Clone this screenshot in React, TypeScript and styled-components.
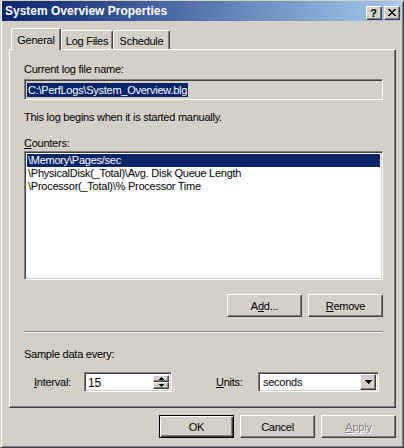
import React from "react";
import styled, { createGlobalStyle, css } from "styled-components";

const FACE = "#D4D0C8";
const HI = "#FFFFFF";
const SH = "#808080";
const DK = "#404040";
const NAVY = "#0A246A";

const Global = createGlobalStyle`
  html, body { margin: 0; padding: 0; background: ${FACE}; }
  * { box-sizing: border-box; }
  body { font-family: "Liberation Sans", Arial, sans-serif; font-size: 11px; color: #000; }
`;

const raised = css`
  border: 1px solid;
  border-color: ${HI} ${DK} ${DK} ${HI};
  box-shadow: inset -1px -1px ${SH};
  background: ${FACE};
`;

const sunken = css`
  border: 1px solid;
  border-color: ${SH} ${HI} ${HI} ${SH};
  box-shadow: inset 1px 1px ${DK}, inset -1px -1px ${FACE};
`;

const Window = styled.div`
  width: 404px;
  height: 448px;
  display: flex;
  flex-direction: column;
  background: ${FACE};
  border: 1px solid;
  border-color: ${FACE} ${DK} ${DK} ${FACE};
  box-shadow: inset 1px 1px ${HI}, inset -1px -1px ${SH};
  padding: 0 2px 2px 1px;
  font: 11px "Liberation Sans", Arial, sans-serif;
  letter-spacing: -0.25px;
`;

const TitleBar = styled.div`
  height: 20px;
  flex: none;
  display: flex;
  align-items: center;
  padding: 0 1px 0 3px;
  background: linear-gradient(to right, ${NAVY}, #a6caf0);
`;

const TitleText = styled.div`
  flex: 1;
  color: #fff;
  font-weight: bold;
  font-size: 12px;
  letter-spacing: 0;
  white-space: nowrap;
`;

const TitleControls = styled.div`
  display: flex;
  gap: 2px;
  margin-top: 3px;
`;

const TitleButton = styled.div`
  ${raised};
  width: 16px;
  height: 14px;
  display: flex;
  align-items: center;
  justify-content: center;
  font-weight: bold;
  font-size: 11px;
  line-height: 12px;
  letter-spacing: 0;
  padding-right: 1px;
`;

const Body = styled.div`
  flex: 1;
  display: flex;
  flex-direction: column;
  padding: 7px 5px 0 7px;
`;

const TabStrip = styled.div`
  height: 21px;
  display: flex;
  align-items: flex-end;
  padding-left: 2px;
  position: relative;
  z-index: 1;
`;

const Tab = styled.div<{ $active?: boolean; $w: number }>`
  width: ${(p) => p.$w}px;
  height: ${(p) => (p.$active ? 22 : 19)}px;
  margin-bottom: ${(p) => (p.$active ? -1 : 0)}px;
  padding-top: ${(p) => (p.$active ? 0 : 1)}px;
  background: ${FACE};
  border-top: 1px solid ${HI};
  border-left: 1px solid ${HI};
  border-right: 1px solid ${DK};
  box-shadow: inset -1px 0 ${SH};
  border-top-left-radius: 2px;
  border-top-right-radius: 2px;
  display: flex;
  align-items: center;
  justify-content: center;
  white-space: nowrap;
`;

const Panel = styled.div`
  height: 359px;
  flex: none;
  display: flex;
  flex-direction: column;
  border: 1px solid;
  border-color: ${HI} ${DK} ${DK} ${HI};
  box-shadow: inset -1px -1px ${SH};
  padding: 13px 12px 0 14px;
`;

const Label = styled.div<{ $mt?: number }>`
  line-height: 13px;
  height: 13px;
  margin-top: ${(p) => p.$mt ?? 0}px;
  white-space: nowrap;
`;

const U = styled.span`
  text-decoration: underline;
  text-underline-offset: 1px;
`;

const ReadOnlyField = styled.div`
  ${sunken};
  margin-top: 3px;
  height: 21px;
  background: ${FACE};
  display: flex;
  align-items: center;
  padding: 0 2px 0 2px;
`;

const Selected = styled.span`
  background: ${NAVY};
  color: #fff;
  line-height: 14px;
  padding: 0 1px;
`;

const ListBox = styled.div`
  ${sunken};
  margin-top: 1px;
  height: 129px;
  background: #fff;
  padding: 2px 2px;
  display: flex;
  flex-direction: column;
`;

const ListRow = styled.div<{ $selected?: boolean }>`
  height: 13px;
  line-height: 13px;
  padding-left: 1px;
  white-space: nowrap;
  background: ${(p) => (p.$selected ? NAVY : "transparent")};
  color: ${(p) => (p.$selected ? "#fff" : "#000")};
`;

const ButtonRow = styled.div<{ $mt: number }>`
  display: flex;
  justify-content: flex-end;
  gap: 6px;
  margin-top: ${(p) => p.$mt}px;
`;

const Button = styled.div<{ $default?: boolean; $disabled?: boolean }>`
  width: 75px;
  height: 23px;
  display: flex;
  align-items: center;
  justify-content: center;
  background: ${FACE};
  border: 1px solid;
  ${(p) =>
    p.$default
      ? css`
          border-color: #000;
          box-shadow: inset 1px 1px ${HI}, inset -1px -1px ${DK}, inset -2px -2px ${SH};
        `
      : css`
          border-color: ${HI} ${DK} ${DK} ${HI};
          box-shadow: inset -1px -1px ${SH};
        `}
  color: ${(p) => (p.$disabled ? SH : "#000")};
  text-shadow: ${(p) => (p.$disabled ? `1px 1px ${HI}` : "none")};
`;

const Separator = styled.div`
  margin-top: 14px;
  height: 2px;
  border-top: 1px solid ${SH};
  border-bottom: 1px solid ${HI};
`;

const FieldRow = styled.div`
  margin-top: 11px;
  height: 20px;
  display: flex;
  align-items: center;
`;

const FieldLabel = styled.div<{ $w: number; $indent?: number }>`
  width: ${(p) => p.$w}px;
  padding-left: ${(p) => p.$indent ?? 0}px;
  white-space: nowrap;
`;

const Spin = styled.div`
  ${sunken};
  width: 88px;
  height: 20px;
  display: flex;
  background: #fff;
  padding: 2px;
`;

const SpinEdit = styled.div`
  flex: 1;
  font-size: 12px;
  line-height: 16px;
  padding-left: 1px;
`;

const SpinButtons = styled.div`
  width: 16px;
  display: flex;
  flex-direction: column;
`;

const SpinButton = styled.div`
  ${raised};
  flex: 1;
  display: flex;
  align-items: center;
  justify-content: center;
`;

const Spacer = styled.div<{ $w: number }>`
  width: ${(p) => p.$w}px;
`;

const Combo = styled.div`
  ${sunken};
  width: 121px;
  height: 20px;
  background: #fff;
  display: flex;
  align-items: center;
  padding: 2px;
`;

const ComboText = styled.div`
  flex: 1;
  padding-left: 2px;
  line-height: 16px;
`;

const DropButton = styled.div`
  ${raised};
  width: 16px;
  height: 16px;
  display: flex;
  align-items: center;
  justify-content: center;
`;

const Arrow = ({ w, up }: { w: number; up?: boolean }) => {
  const h = Math.ceil(w / 2);
  const rects = [];
  for (let i = 0; i < h; i++) {
    const y = up ? h - 1 - i : i;
    rects.push(<rect key={i} x={i} y={y} width={w - 2 * i} height={1} fill="#000" />);
  }
  return (
    <svg width={w} height={h} viewBox={`0 0 ${w} ${h}`} shapeRendering="crispEdges">
      {rects}
    </svg>
  );
};

const CloseGlyph = () => {
  const rects = [];
  for (let i = 0; i < 7; i++) {
    rects.push(<rect key={"a" + i} x={i} y={i} width={2} height={1} fill="#000" />);
    rects.push(<rect key={"b" + i} x={6 - i} y={i} width={2} height={1} fill="#000" />);
  }
  return (
    <svg width={8} height={7} viewBox="0 0 8 7" shapeRendering="crispEdges">
      {rects}
    </svg>
  );
};

export default function App() {
  return (
    <>
      <Global />
      <Window>
        <TitleBar>
          <TitleText>System Overview Properties</TitleText>
          <TitleControls>
            <TitleButton>?</TitleButton>
            <TitleButton>
              <CloseGlyph />
            </TitleButton>
          </TitleControls>
        </TitleBar>
        <Body>
          <TabStrip>
            <Tab $active $w={50}>General</Tab>
            <Tab $w={52}>Log Files</Tab>
            <Tab $w={57}>Schedule</Tab>
          </TabStrip>
          <Panel>
            <Label>Current log file name:</Label>
            <ReadOnlyField>
              <Selected>C:\PerfLogs\System_Overview.blg</Selected>
            </ReadOnlyField>
            <Label $mt={11}>This log begins when it is started manually.</Label>
            <Label $mt={13}>
              <U>C</U>ounters:
            </Label>
            <ListBox>
              <ListRow $selected>\Memory\Pages/sec</ListRow>
              <ListRow>\PhysicalDisk(_Total)\Avg. Disk Queue Length</ListRow>
              <ListRow>\Processor(_Total)\% Processor Time</ListRow>
            </ListBox>
            <ButtonRow $mt={14}>
              <Button>
                A<U>d</U>d...
              </Button>
              <Button>
                <U>R</U>emove
              </Button>
            </ButtonRow>
            <Separator />
            <Label $mt={15}>Sample data every:</Label>
            <FieldRow>
              <FieldLabel $w={60} $indent={10}>
                <U>I</U>nterval:
              </FieldLabel>
              <Spin>
                <SpinEdit>15</SpinEdit>
                <SpinButtons>
                  <SpinButton>
                    <Arrow w={5} up />
                  </SpinButton>
                  <SpinButton>
                    <Arrow w={5} />
                  </SpinButton>
                </SpinButtons>
              </Spin>
              <Spacer $w={44} />
              <FieldLabel $w={42}>
                <U>U</U>nits:
              </FieldLabel>
              <Combo>
                <ComboText>seconds</ComboText>
                <DropButton>
                  <Arrow w={7} />
                </DropButton>
              </Combo>
            </FieldRow>
          </Panel>
          <ButtonRow $mt={7}>
            <Button $default>OK</Button>
            <Button>Cancel</Button>
            <Button $disabled>
              <U>A</U>pply
            </Button>
          </ButtonRow>
        </Body>
      </Window>
    </>
  );
}
